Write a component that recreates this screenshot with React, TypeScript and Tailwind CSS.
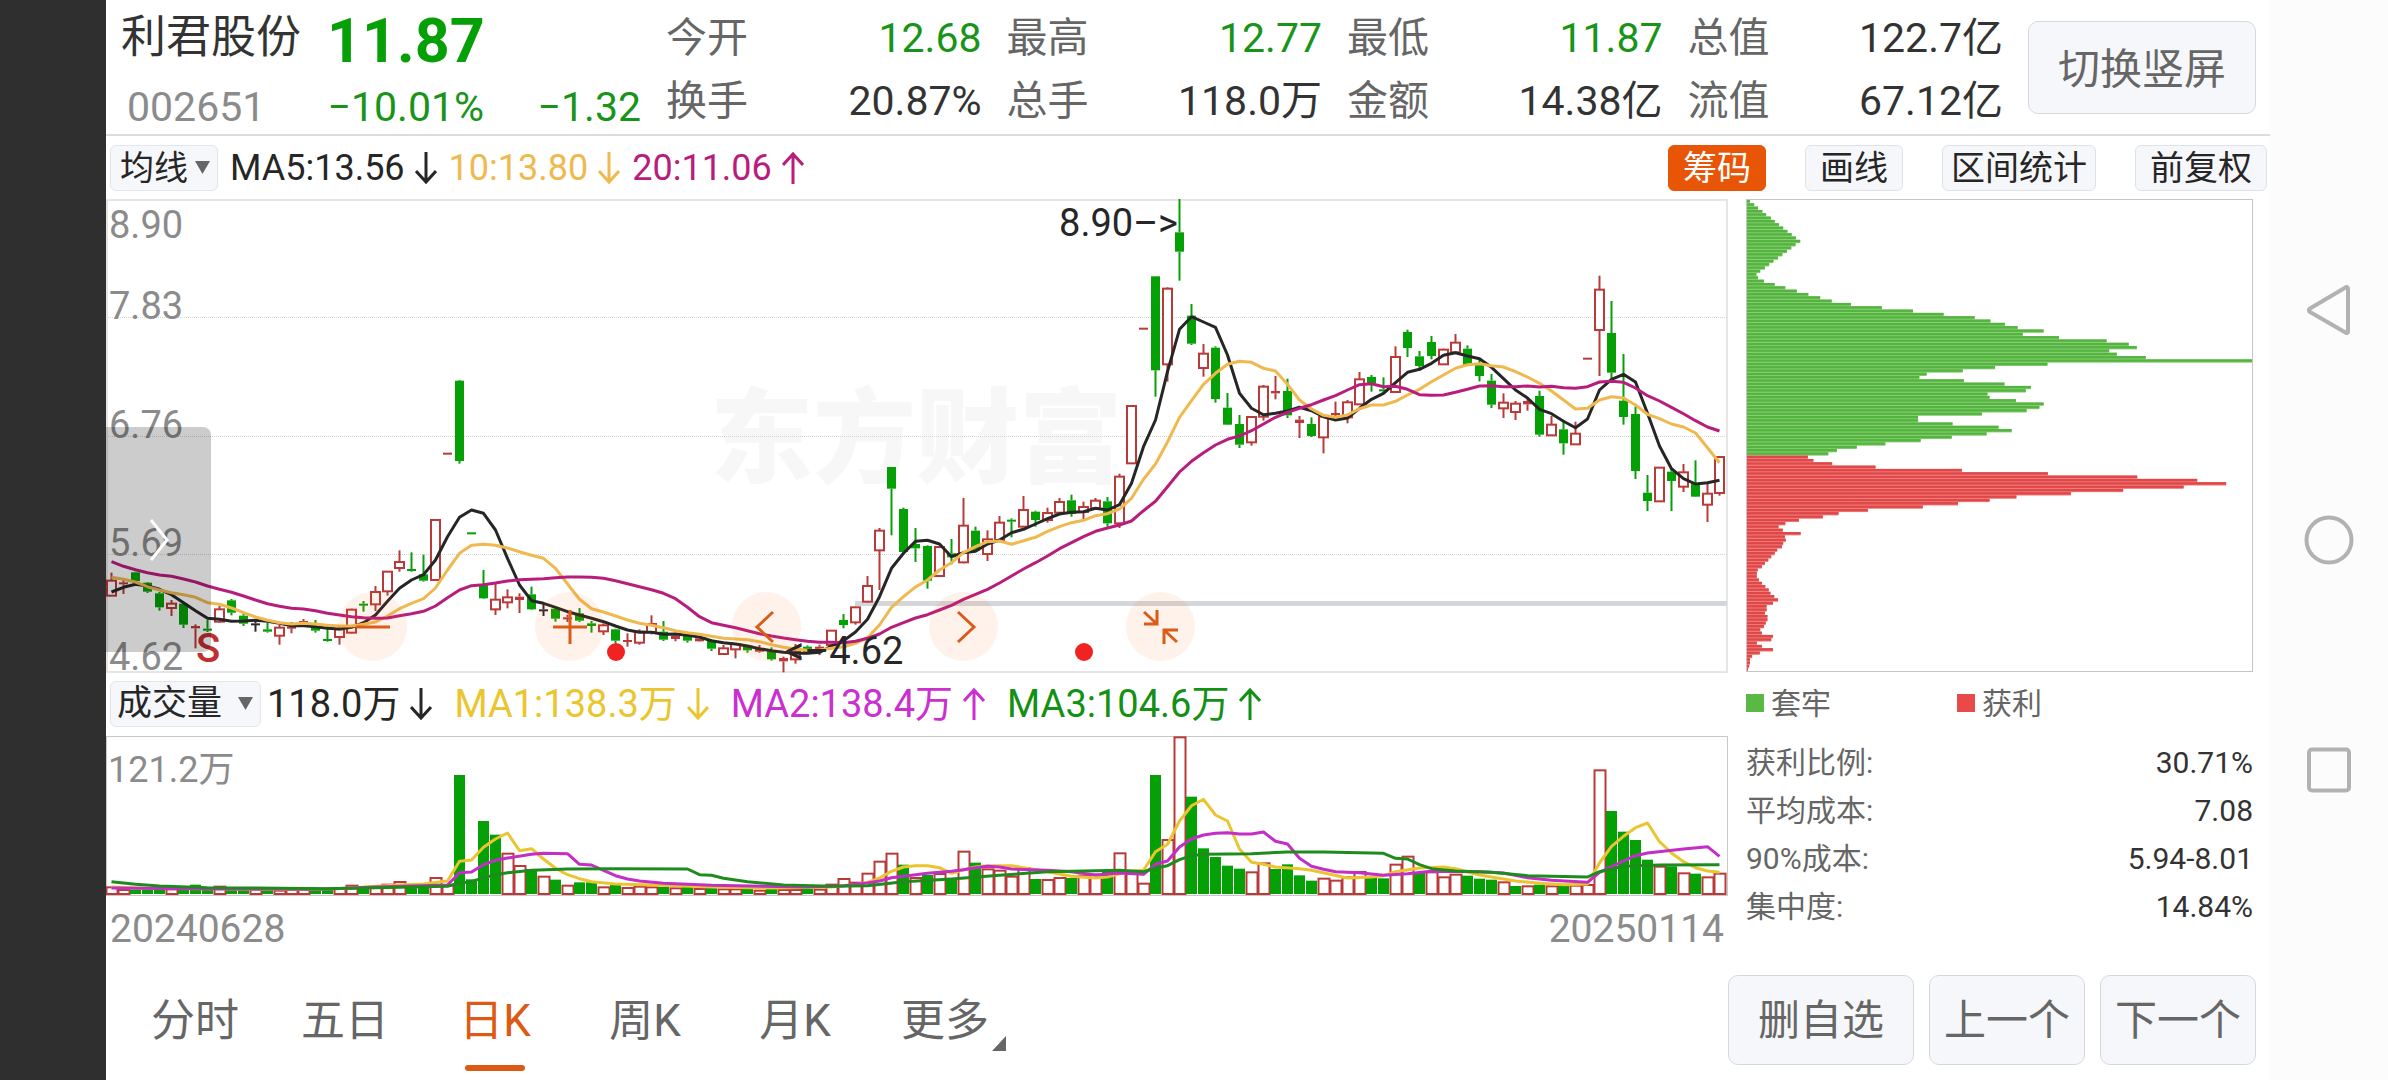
import { Fragment } from "react";
import type { ReactNode } from "react";

type Kind = "r" | "g" | "k";
type Candle = [Kind, number, number, number, number];

// [colour, high, body top, body bottom, low], levels in thirds of a pixel
const candles: Candle[] = [
  ["r", 1148, 1172, 1217, 1217], ["r", 1170, 1177, 1183, 1212], ["g", 1145, 1147, 1173, 1175],
  ["g", 1176, 1178, 1205, 1209], ["g", 1206, 1210, 1252, 1262], ["r", 1230, 1241, 1254, 1278],
  ["g", 1240, 1241, 1304, 1314], ["r", 1303, 1308, 1315, 1375], ["g", 1290, 1316, 1322, 1326],
  ["r", 1248, 1258, 1295, 1298], ["g", 1227, 1231, 1268, 1276], ["g", 1268, 1277, 1301, 1308],
  ["k", 1288, 1300, 1304, 1325], ["g", 1299, 1318, 1325, 1328], ["r", 1305, 1313, 1337, 1364],
  ["r", 1296, 1310, 1315, 1330], ["r", 1287, 1293, 1298, 1307], ["g", 1290, 1309, 1322, 1328],
  ["g", 1305, 1347, 1352, 1355], ["r", 1310, 1318, 1341, 1364], ["r", 1256, 1259, 1328, 1330],
  ["g", 1233, 1241, 1246, 1265], ["r", 1188, 1206, 1243, 1263], ["r", 1143, 1145, 1204, 1217],
  ["r", 1081, 1116, 1134, 1145], ["g", 1087, 1137, 1143, 1145], ["g", 1094, 1153, 1172, 1175],
  ["r", 988, 990, 1170, 1172], ["r", 788, 788, 794, 794], ["g", 570, 572, 813, 821],
  ["g", 1027, 1027, 1032, 1032], ["g", 1140, 1186, 1225, 1227], ["r", 1180, 1229, 1258, 1275],
  ["r", 1198, 1222, 1237, 1255], ["r", 1210, 1220, 1230, 1269], ["g", 1190, 1213, 1258, 1260],
  ["k", 1240, 1258, 1262, 1278], ["g", 1254, 1256, 1286, 1295], ["r", 1274, 1282, 1287, 1296],
  ["g", 1254, 1270, 1292, 1296], ["g", 1293, 1300, 1308, 1328], ["r", 1300, 1306, 1324, 1335],
  ["g", 1316, 1318, 1352, 1360], ["r", 1330, 1350, 1355, 1370], ["r", 1318, 1325, 1358, 1364],
  ["r", 1276, 1302, 1326, 1333], ["g", 1293, 1325, 1349, 1353], ["r", 1328, 1337, 1347, 1354],
  ["g", 1336, 1338, 1352, 1358], ["r", 1342, 1345, 1354, 1355], ["g", 1348, 1350, 1376, 1383],
  ["r", 1365, 1375, 1392, 1395], ["r", 1360, 1362, 1378, 1405], ["g", 1365, 1367, 1381, 1388],
  ["r", 1365, 1377, 1385, 1388], ["g", 1372, 1384, 1408, 1412], ["r", 1400, 1404, 1414, 1447],
  ["r", 1362, 1385, 1408, 1421], ["g", 1366, 1370, 1390, 1392], ["r", 1364, 1370, 1380, 1395],
  ["r", 1320, 1322, 1365, 1368], ["g", 1272, 1290, 1305, 1315], ["r", 1250, 1252, 1297, 1304],
  ["r", 1158, 1188, 1235, 1237], ["r", 1014, 1022, 1081, 1200], ["g", 831, 831, 896, 1036],
  ["g", 953, 957, 1086, 1088], ["g", 1014, 1062, 1075, 1116], ["g", 1066, 1068, 1172, 1196],
  ["r", 1070, 1071, 1158, 1160], ["g", 1047, 1090, 1102, 1123], ["r", 924, 1007, 1117, 1120],
  ["g", 1010, 1022, 1081, 1085], ["r", 1021, 1048, 1092, 1113], ["r", 978, 998, 1050, 1052],
  ["g", 985, 989, 995, 1042], ["r", 918, 960, 1010, 1012], ["g", 962, 965, 990, 1010],
  ["r", 953, 969, 990, 998], ["r", 924, 936, 968, 970], ["g", 914, 931, 972, 980],
  ["r", 935, 951, 966, 987], ["r", 924, 932, 955, 958], ["g", 921, 934, 1000, 1010],
  ["r", 851, 860, 1000, 1014], ["r", 646, 648, 820, 821], ["r", 413, 413, 418, 418],
  ["g", 258, 259, 541, 620], ["r", 292, 296, 523, 575], ["g", 27, 127, 185, 272],
  ["g", 342, 377, 461, 465], ["r", 462, 491, 534, 560], ["g", 469, 473, 627, 638],
  ["g", 609, 653, 704, 705], ["g", 675, 702, 764, 774], ["r", 679, 681, 757, 767],
  ["r", 585, 590, 680, 692], ["r", 558, 603, 610, 628], ["g", 566, 603, 676, 684],
  ["r", 678, 689, 699, 744], ["g", 682, 702, 738, 741], ["r", 678, 680, 742, 790],
  ["r", 635, 669, 675, 685], ["r", 630, 637, 682, 700], ["r", 546, 568, 643, 645],
  ["g", 555, 561, 580, 605], ["g", 562, 598, 604, 612], ["r", 469, 501, 606, 608],
  ["g", 419, 426, 474, 501], ["g", 483, 499, 528, 543], ["g", 438, 456, 498, 508],
  ["r", 476, 479, 523, 525], ["r", 432, 458, 487, 489], ["g", 466, 476, 526, 528],
  ["g", 505, 520, 558, 574], ["g", 552, 572, 644, 654], ["r", 610, 638, 655, 684],
  ["r", 633, 641, 666, 690], ["r", 625, 633, 643, 662], ["g", 602, 618, 734, 740],
  ["r", 678, 704, 736, 738], ["g", 695, 718, 760, 794], ["r", 695, 731, 763, 765],
  ["r", 503, 503, 508, 508], ["r", 257, 299, 420, 558], ["g", 333, 429, 548, 568],
  ["g", 492, 632, 681, 704], ["g", 650, 672, 843, 867], ["g", 855, 908, 933, 963],
  ["r", 831, 833, 934, 936], ["g", 835, 845, 873, 963], ["r", 822, 847, 890, 906],
  ["g", 811, 880, 920, 921], ["r", 880, 911, 944, 996], ["r", 799, 801, 909, 917],
];

const ma5 = [
  1206, 1192, 1183, 1188, 1198, 1214, 1238, 1262, 1285, 1288, 1294, 1293, 1291, 1294, 1300,
  1307, 1307, 1310, 1315, 1317, 1312, 1298, 1275, 1234, 1195, 1170, 1154, 1110, 1040, 982,
  960, 970, 1020, 1105, 1185, 1232, 1240, 1252, 1265, 1275, 1285, 1295, 1308, 1320, 1327,
  1327, 1333, 1332, 1336, 1341, 1352, 1358, 1362, 1368, 1376, 1382, 1387, 1390, 1390, 1387,
  1368, 1352, 1326, 1288, 1220, 1135, 1090, 1054, 1051, 1062, 1100, 1088, 1084, 1062, 1050,
  1028, 1018, 1002, 986, 972, 967, 965, 955, 960, 944, 880, 770, 690, 545, 418,
  380, 396, 412, 495, 610, 655, 674, 670, 663, 652, 662, 680, 690, 684, 655,
  628, 610, 578, 547, 538, 520, 496, 488, 498, 506, 532, 566, 600, 624, 658,
  671, 694, 713, 687, 600, 568, 553, 576, 670, 768, 836, 866, 882, 878, 871,
];

const ma10 = [
  1162, 1168, 1176, 1190, 1200, 1208, 1214, 1222, 1238, 1243, 1254, 1268, 1281, 1291, 1298,
  1302, 1300, 1302, 1306, 1308, 1308, 1303, 1296, 1278, 1256, 1240, 1226, 1194, 1140, 1090,
  1066, 1063, 1066, 1074, 1085, 1096, 1105, 1135, 1182, 1228, 1256, 1266, 1278, 1290, 1300,
  1306, 1313, 1322, 1328, 1333, 1339, 1345, 1347, 1349, 1355, 1364, 1372, 1377, 1381, 1380,
  1375, 1370, 1360, 1343, 1305, 1252, 1220, 1191, 1170, 1140, 1118, 1088, 1070, 1055, 1053,
  1063, 1052, 1042, 1024, 1010, 998, 991, 977, 971, 957, 925, 868, 822, 756, 682,
  632, 583, 550, 523, 514, 517, 535, 543, 583, 630, 657, 676, 682, 675, 656,
  645, 645, 634, 615, 598, 575, 555, 535, 524, 521, 527, 531, 545, 561, 580,
  603, 630, 657, 655, 630, 620, 624, 645, 673, 686, 702, 711, 729, 773, 818,
];

const ma20 = [
  1115, 1129, 1139, 1148, 1155, 1159, 1167, 1176, 1188, 1198, 1207, 1218, 1230, 1241, 1249,
  1255, 1257, 1262, 1270, 1275, 1280, 1283, 1285, 1284, 1277, 1271, 1264, 1248, 1223, 1200,
  1187, 1184, 1179, 1173, 1169, 1168, 1166, 1163, 1161, 1161, 1162, 1165, 1172, 1181, 1190,
  1199, 1210, 1226, 1252, 1280, 1298, 1306, 1313, 1322, 1331, 1338, 1344, 1349, 1354, 1357,
  1357, 1358, 1354, 1345, 1332, 1312, 1298, 1284, 1274, 1260, 1246, 1228, 1213, 1198, 1179,
  1158, 1137, 1118, 1098, 1076, 1058, 1040, 1024, 1014, 1005, 993, 962, 934, 890, 846,
  814, 788, 765, 748, 738, 722, 702, 682, 667, 655, 644, 630, 617, 600, 584,
  581, 590, 589, 598, 614, 616, 615, 607, 598, 588, 587, 590, 590, 588, 591,
  589, 593, 595, 590, 576, 574, 577, 594, 617, 633, 652, 671, 692, 711, 723,
];

const volumeKinds =
  "rrgggrgggrggrgrrrggrrgrrrggrrggggrrgrgrggrgrrrgrgrgrrgrgrrgrrrrrrrgrgrgrgrrrrgrrgrrgrrrgrrggggg" +
  "rrggggrrrrggrrgrrrgggrgrgrgrrrggggrgrgrr";

const volumes = [
  650, 658, 660, 660, 660, 656, 656, 645, 654, 648, 654, 656, 658, 660, 660,
  658, 658, 660, 658, 652, 645, 655, 648, 642, 634, 650, 652, 622, 644, 316,
  629, 454, 495, 549, 586, 598, 618, 630, 645, 638, 638, 650, 645, 652, 648,
  650, 652, 653, 650, 655, 655, 656, 656, 654, 660, 658, 658, 658, 658, 657,
  642, 625, 636, 609, 573, 549, 585, 622, 616, 610, 625, 543, 579, 596, 600,
  618, 592, 628, 628, 622, 625, 615, 612, 605, 548, 608, 639, 316, 508, 200,
  381, 536, 562, 588, 597, 605, 578, 598, 584, 617, 633, 624, 630, 620, 604,
  624, 626, 582, 558, 610, 605, 620, 612, 618, 627, 630, 635, 649, 647, 645,
  647, 648, 645, 643, 299, 424, 486, 511, 570, 588, 590, 608, 612, 620, 609,
];

// [day index, level]
const volMa1 = [
  [0, 652], [3, 656], [8, 657], [12, 659], [18, 658], [20, 655], [22, 650], [24, 646], [26, 643],
  [28, 634], [29, 575], [30, 571], [31, 533], [32, 508], [33, 490], [34, 543], [35, 537], [36, 568],
  [37, 596], [38, 615], [39, 627], [40, 636], [42, 643], [45, 646], [50, 652], [55, 655], [60, 652],
  [62, 645], [63, 638], [64, 625], [65, 605], [66, 592], [67, 588], [68, 588], [69, 594], [70, 611],
  [71, 600], [72, 592], [73, 588], [75, 588], [76, 594], [78, 606], [80, 620], [82, 625], [83, 622],
  [84, 612], [85, 604], [86, 602], [87, 546], [88, 524], [89, 454], [90, 408], [91, 389], [92, 436],
  [93, 454], [94, 538], [95, 578], [96, 584], [97, 592], [99, 597], [100, 602], [103, 625],
  [105, 622], [106, 618], [107, 606], [109, 595], [111, 592], [112, 597], [114, 616], [117, 634],
  [119, 641], [121, 645], [123, 643], [124, 580], [125, 530], [126, 500], [127, 474], [128, 460],
  [129, 516], [130, 550], [131, 576], [132, 594], [133, 604], [134, 608],
];
const volMa2 = [
  [0, 655], [8, 658], [18, 658], [22, 652], [28, 646], [29, 609], [30, 607], [31, 585], [32, 572],
  [33, 565], [35, 554], [36, 551], [38, 552], [39, 584], [40, 586], [41, 602], [42, 618], [43, 628],
  [44, 634], [46, 641], [50, 647], [58, 652], [61, 648], [63, 640], [64, 634], [65, 624], [66, 620],
  [68, 611], [70, 605], [71, 600], [72, 594], [73, 590], [74, 592], [75, 598], [78, 602], [80, 606],
  [82, 616], [84, 610], [86, 614], [87, 584], [88, 574], [89, 532], [90, 508], [91, 496], [92, 491],
  [93, 489], [94, 493], [95, 493], [96, 487], [97, 515], [98, 523], [99, 566], [100, 590],
  [101, 599], [102, 606], [104, 609], [106, 617], [108, 612], [110, 605], [114, 606], [116, 610],
  [118, 624], [120, 632], [123, 638], [124, 608], [126, 574], [127, 558], [128, 550], [131, 538],
  [133, 531], [134, 560],
];
const volMa3 = [
  [0, 636], [2, 644], [4, 649], [8, 654], [14, 656], [18, 657], [22, 654], [28, 650], [29, 640],
  [30, 636], [31, 624], [32, 615], [33, 609], [35, 602], [38, 598], [42, 597], [48, 598], [49, 615],
  [50, 617], [51, 626], [53, 636], [56, 646], [60, 650], [63, 648], [66, 636], [70, 628], [74, 617],
  [78, 606], [84, 602], [86, 606], [87, 595], [88, 588], [89, 570], [90, 558], [91, 554], [95, 552],
  [98, 547], [101, 547], [106, 551], [107, 566], [108, 568], [109, 585], [110, 597], [112, 604],
  [115, 608], [118, 618], [123, 622], [124, 606], [126, 590], [129, 586], [134, 585],
];

// chip counts per price level, the first 77 levels lie above the last price
const chips = [
  7, 17, 26, 36, 45, 56, 65, 75, 85, 95, 105, 115, 125, 114, 104, 94, 83, 73, 62, 52, 42, 31, 22,
  26, 40, 65, 90, 117, 144, 172, 199, 244, 317, 390, 462, 535, 572, 606, 636, 697, 648, 733, 845,
  897, 916, 851, 869, 937, 1188, 706, 583, 507, 422, 405, 510, 605, 667, 655, 565, 570, 632, 697,
  687, 657, 552, 402, 402, 483, 591, 622, 563, 481, 408, 325, 258, 211, 191,
  143, 156, 200, 302, 505, 707, 917, 1058, 1126, 1026, 884, 761, 633, 570, 496, 413, 284, 215,
  178, 122, 90, 74, 84, 126, 89, 91, 85, 82, 71, 65, 57, 50, 42, 35, 25, 23, 23, 28, 35, 43, 51,
  55, 64, 73, 61, 46, 46, 42, 48, 48, 44, 40, 31, 35, 61, 57, 23, 35, 61, 30, 12, 7, 7, 5, 2,
];
const TRAPPED_LEVELS = 77;

const GREEN = "#05a005";
const RED = "#b93a38";

const dayX = (i: number) => 5.5 + i * 12;
const priceY = (v: number) => v / 3 - 9;
const volumeY = (v: number) => (v - 199) / 3;

const pricePath = (values: number[]) =>
  values.map((v, i) => `${dayX(i)},${priceY(v).toFixed(1)}`).join(" ");
const volumePath = (points: number[][]) =>
  points.map(([i, v]) => `${dayX(i)},${volumeY(v).toFixed(1)}`).join(" ");

function CandleMark({ candle, x }: { candle: Candle; x: number }) {
  const [kind, high, top, bottom, low] = candle;
  const yTop = priceY(top);
  const height = priceY(bottom) - yTop;
  const hollow = kind === "r" && height > 3.8;
  const color = kind === "g" ? GREEN : kind === "k" ? "#2a2a2a" : RED;

  return (
    <g stroke={color} strokeWidth={2}>
      {high < top && <line x1={x} x2={x} y1={priceY(high)} y2={yTop} />}
      {low > bottom && <line x1={x} x2={x} y1={yTop + height} y2={priceY(low)} />}
      {hollow ? (
        <rect x={x - 4.5} y={yTop} width={9} height={height} fill="#fff" />
      ) : (
        <rect x={x - 4.5} y={yTop} width={9} height={Math.max(height, 2)} fill={color} stroke="none" />
      )}
    </g>
  );
}

function PriceChart() {
  const axis: [string, number][] = [
    ["8.90", 39],
    ["7.83", 120],
    ["6.76", 239],
    ["5.69", 357],
    ["4.62", 471],
  ];

  return (
    <svg viewBox="0 0 1622 473" className="block w-full overflow-visible" role="img" aria-label="日K">
      <text x={604} y={276} fontSize={103} fontWeight={900} fill="#f7f7f7">
        东方财富
      </text>
      {[118, 237, 355].map((y) => (
        <line key={y} x1={0} x2={1622} y1={y + 0.5} y2={y + 0.5} stroke="#d4d4d4" strokeDasharray="1 1" />
      ))}
      <rect x={1} y={1} width={1620} height={472} fill="none" stroke="#e5e5e5" strokeWidth={2} />
      <rect x={749} y={402} width={872} height={5} fill="#d3d7dc" />
      <g fontSize={38} fill="#8b8b8b">
        {axis.map(([label, y]) => (
          <text key={label} x={3} y={y}>
            {label}
          </text>
        ))}
      </g>
      {candles.map((candle, i) => (
        <CandleMark key={i} candle={candle} x={dayX(i)} />
      ))}
      <g fill="none" strokeWidth={3} strokeLinejoin="round">
        <polyline points={pricePath(ma5)} stroke="#262626" />
        <polyline points={pricePath(ma10)} stroke="#efb950" />
        <polyline points={pricePath(ma20)} stroke="#b91d7c" />
      </g>
      <g fontSize={38} fill="#262626">
        <text x={1072} y={37} textAnchor="end">
          8.90–&gt;
        </text>
        <text x={679} y={465}>
          &lt;–4.62
        </text>
      </g>
      <text x={90} y={463} fontSize={40} fontWeight={500} fill="#c0302e">
        S
      </text>
      <circle cx={510} cy={453} r={9} fill="#f02222" />
      <circle cx={978} cy={453} r={9} fill="#f02222" />
    </svg>
  );
}

function VolumeChart() {
  return (
    <svg viewBox="0 0 1622 160" className="block w-full" role="img" aria-label="成交量">
      <rect x={0.5} y={0.5} width={1621} height={159} fill="none" stroke="#c8c8c8" />
      <text x={2} y={46} fontSize={36} fill="#8b8b8b">
        121.2万
      </text>
      {volumes.map((v, i) => {
        const y = volumeY(v);
        return volumeKinds[i] === "g" ? (
          <rect key={i} x={dayX(i) - 5.5} y={y} width={11} height={158 - y} fill={GREEN} />
        ) : (
          <rect
            key={i}
            x={dayX(i) - 5}
            y={y + 1}
            width={11}
            height={157 - y}
            fill="#fff"
            stroke={RED}
            strokeWidth={2}
          />
        );
      })}
      <g fill="none" strokeWidth={3} strokeLinejoin="round">
        <polyline points={volumePath(volMa1)} stroke="#eac52f" />
        <polyline points={volumePath(volMa2)} stroke="#c32fc6" />
        <polyline points={volumePath(volMa3)} stroke="#1d8c1d" />
      </g>
    </svg>
  );
}

function ChipChart() {
  const step = 3.32;
  return (
    <svg viewBox="0 0 507 473" className="block w-full" role="img" aria-label="筹码">
      {chips.map((count, i) => {
        const trapped = i < TRAPPED_LEVELS;
        const y = 1 + i * step;
        return (
          <Fragment key={i}>
            <rect x={1} y={y} width={count / 2.35} height={step} fill={trapped ? "#7fce6c" : "#f57676"} />
            <rect x={1} y={y} width={count / 2.35} height={2.4} fill={trapped ? "#55b440" : "#de4848"} />
          </Fragment>
        );
      })}
      <rect x={0.5} y={0.5} width={506} height={472} fill="none" stroke="#c4c4c4" />
    </svg>
  );
}

function Arrow({ up = false }: { up?: boolean }) {
  return (
    <svg width="22" height="34" viewBox="0 0 22 34" fill="none" stroke="currentColor" strokeWidth="3">
      <path d={up ? "M11 33V3M1 14L11 3L21 14" : "M11 1V31M1 20L11 31L21 20"} />
    </svg>
  );
}

function Indicator({ text, className, up }: { text: string; className: string; up?: boolean }) {
  return (
    <span className={`flex items-center gap-[10px] whitespace-nowrap ${className}`}>
      {text}
      <Arrow up={up} />
    </span>
  );
}

function Picker({ label, options, className }: { label: string; options: string[]; className: string }) {
  return (
    <div className="relative">
      <select
        aria-label={label}
        className={`block h-[46px] appearance-none rounded-md border border-[#e2e5e9] bg-[#f6f7fa] leading-[44px] text-[#262626] ${className}`}
      >
        {options.map((option) => (
          <option key={option}>{option}</option>
        ))}
      </select>
      <svg
        className="pointer-events-none absolute top-4 right-2"
        width="15"
        height="13"
        viewBox="0 0 15 13"
        fill="#666"
      >
        <path d="M0 0H15L7.5 13Z" />
      </svg>
    </div>
  );
}

function ToolButton({ children, className }: { children: ReactNode; className: string }) {
  return (
    <button
      type="button"
      className={`h-[46px] rounded-md border text-[34px] leading-[44px] whitespace-nowrap ${className}`}
    >
      {children}
    </button>
  );
}

const chartActions = [
  { label: "缩小", path: "M-17 0H17" },
  { label: "放大", path: "M-17 0H17M0 -17V17" },
  { label: "左移", path: "M6 -15L-10 0L6 15" },
  { label: "右移", path: "M-6 -15L10 0L-6 15" },
  { label: "收起", path: "M-17 -15L-4 -3M-4 -17V-3H-17M16 15L4 4M17 3H3V17" },
];

const quotes = [
  [["今开", "12.68", true], ["换手", "20.87%", false]],
  [["最高", "12.77", true], ["总手", "118.0万", false]],
  [["最低", "11.87", true], ["金额", "14.38亿", false]],
  [["总值", "122.7亿", false], ["流值", "67.12亿", false]],
] as [string, string, boolean][][];

const chipStats = [
  ["获利比例:", "30.71%"],
  ["平均成本:", "7.08"],
  ["90%成本:", "5.94-8.01"],
  ["集中度:", "14.84%"],
];

const periods = ["分时", "五日", "日K", "周K", "月K", "更多"];

function Header() {
  return (
    <header className="flex h-[136px] border-b-2 border-[#dcdcdc] pr-[14px]">
      <div className="w-[560px] pl-[15px]">
        <div className="flex h-[76px] items-center gap-[26px] whitespace-nowrap">
          <h1 className="text-[45px] text-[#333]">利君股份</h1>
          <span className="pt-[6px] text-[61px] leading-[76px] font-bold text-[#05a005]">11.87</span>
        </div>
        <div className="flex h-[62px] items-center pl-[6px] text-[41px] leading-[62px] whitespace-nowrap text-[#189418]">
          <span className="text-[#8b8b8b]">002651</span>
          <span className="flex-1 text-right">−10.01%</span>
          <span className="w-[157px] text-right">−1.32</span>
          <span className="w-[25px]" />
        </div>
      </div>
      <dl className="grid flex-1 grid-cols-4 pt-[7px] text-[41px]">
        {quotes.map((column) => (
          <div key={column[0][0]} className="pr-[25px]">
            {column.map(([label, value, down]) => (
              <div key={label} className="flex h-[63px] items-center justify-between whitespace-nowrap">
                <dt className="text-[#666]">{label}</dt>
                <dd className={down ? "text-[#189418]" : "text-[#333]"}>{value}</dd>
              </div>
            ))}
          </div>
        ))}
      </dl>
      <button
        type="button"
        className="mt-[21px] h-[93px] w-[228px] rounded-[10px] border border-[#d5d9de] bg-[#f6f7fa] pt-[3px] text-[42px] text-[#666]"
      >
        切换竖屏
      </button>
    </header>
  );
}

function Toolbar() {
  return (
    <div className="flex h-[63px] items-center justify-between pr-[3px] pl-1">
      <div className="flex items-center gap-3 text-[36px]">
        <Picker label="主图指标" options={["均线"]} className="w-[108px] pl-[9px] text-[34px]" />
        <Indicator text="MA5:13.56" className="text-[#262626]" />
        <Indicator text="10:13.80" className="text-[#efb950]" />
        <Indicator text="20:11.06" className="text-[#b91d7c]" up />
      </div>
      <div className="flex items-center gap-[39px]">
        <ToolButton className="border-[#e95506] bg-[#e95506] px-[14px] text-white">筹码</ToolButton>
        <ToolButton className="border-[#dfe2e7] bg-[#f6f7fa] px-[14px] text-[#262626]">画线</ToolButton>
        <ToolButton className="border-[#dfe2e7] bg-[#f6f7fa] px-2 text-[#262626]">区间统计</ToolButton>
        <ToolButton className="border-[#dfe2e7] bg-[#f6f7fa] px-[14px] text-[#262626]">前复权</ToolButton>
      </div>
    </div>
  );
}

export default function App() {
  return (
    <div className="flex min-h-screen bg-white font-[Roboto,'Noto_Sans_CJK_SC',sans-serif]">
      <div className="w-[106px] shrink-0 bg-[#2f2f2f]" />

      <main className="flex min-w-0 flex-1 flex-col">
        <Header />
        <Toolbar />

        <div className="grid grid-cols-[minmax(0,1fr)_507px] gap-x-[18px] pr-[17px]">
          <section>
            <div className="relative">
              <PriceChart />
              {/* 图表操作 */}
              <div className="absolute bottom-[11px] left-[232px] flex gap-32">
                {chartActions.map(({ label, path }) => (
                  <button
                    key={label}
                    type="button"
                    aria-label={label}
                    className="flex size-[69px] items-center justify-center rounded-full bg-[#ff5a06]/8"
                  >
                    <svg width="40" height="40" viewBox="-20 -20 40 40" fill="none" stroke="#d95c18" strokeWidth="3">
                      <path d={path} />
                    </svg>
                  </button>
                ))}
              </div>
              <button
                type="button"
                aria-label="展开"
                className="absolute top-[228px] left-0 flex h-[225px] w-[105px] items-center justify-center rounded-r-lg bg-black/20"
              >
                <svg width="20" height="44" viewBox="0 0 20 44" fill="none" stroke="#fff" strokeWidth="3">
                  <path d="M2 2L18 22L2 42" />
                </svg>
              </button>
            </div>

            <div className="flex h-16 items-center gap-[22px] pl-1 text-[38px]">
              <div className="-mr-4">
                <Picker label="副图指标" options={["成交量"]} className="w-[151px] pl-[6px] text-[35px]" />
              </div>
              <Indicator text="118.0万" className="text-[#262626]" />
              <Indicator text="MA1:138.3万" className="text-[#eac52f]" />
              <Indicator text="MA2:138.4万" className="text-[#cb2fd0]" up />
              <Indicator text="MA3:104.6万" className="text-[#149014]" up />
            </div>

            <VolumeChart />
            <div className="flex h-[66px] items-center justify-between px-1 text-[39px] text-[#8b8b8b]">
              <span>20240628</span>
              <span>20250114</span>
            </div>
          </section>

          <aside>
            <ChipChart />
            <div className="flex h-[62px] items-center text-[30px] text-[#666]">
              <span className="flex w-[211px] items-center gap-[7px]">
                <i className="size-[18px] bg-[#5ab945]" />
                套牢
              </span>
              <span className="flex items-center gap-[7px]">
                <i className="size-[18px] bg-[#e84a4a]" />
                获利
              </span>
            </div>
            <dl className="pt-1 text-[30px]">
              {chipStats.map(([label, value]) => (
                <div key={label} className="flex h-12 items-center justify-between">
                  <dt className="text-[#666]">{label}</dt>
                  <dd className="text-[#333]">{value}</dd>
                </div>
              ))}
            </dl>
          </aside>
        </div>

        <footer className="mt-auto flex h-[105px] items-start justify-between pr-[14px] pl-[14px]">
          <nav className="flex">
            {periods.map((period) => (
              <button
                key={period}
                type="button"
                className={`relative flex h-24 w-[150px] items-center justify-center pb-1 text-[44px] ${
                  period === "日K" ? "text-[#dd5a14]" : "text-[#666]"
                }`}
              >
                {period}
                {period === "日K" && (
                  <span className="absolute bottom-0 h-[6px] w-[60px] rounded-full bg-[#dd5a14]" />
                )}
                {period === "更多" && (
                  <svg className="absolute right-[14px] bottom-5" width="14" height="15" viewBox="0 0 14 15" fill="#666">
                    <path d="M14 0V15H0Z" />
                  </svg>
                )}
              </button>
            ))}
          </nav>
          <div className="flex gap-[15px] text-[42px] text-[#666]">
            <button type="button" className="h-[90px] w-[186px] rounded-[10px] border border-[#d5d9de] bg-[#f6f7fa]">
              删自选
            </button>
            <button type="button" className="h-[90px] w-[156px] rounded-[10px] border border-[#d5d9de] bg-[#f6f7fa]">
              上一个
            </button>
            <button type="button" className="h-[90px] w-[156px] rounded-[10px] border border-[#d5d9de] bg-[#f6f7fa]">
              下一个
            </button>
          </div>
        </footer>
      </main>

      {/* 系统导航键 */}
      <nav className="flex w-[118px] shrink-0 flex-col items-center justify-center gap-[180px] bg-[#fcfcfc]">
        <button type="button" aria-label="返回">
          <svg className="block" width="50" height="50" viewBox="0 0 50 50" fill="none" stroke="#b2b2b2" strokeWidth="4" strokeLinejoin="round">
            <path d="M44 3.5C44 2 42.5 1.5 41.5 2.5L6 23.5C4.5 24.5 4.5 26 6 27L41.5 47.5C42.5 48.5 44 48 44 46.5Z" />
          </svg>
        </button>
        <button type="button" aria-label="主页">
          <svg className="block" width="50" height="50" viewBox="0 0 50 50" fill="none" stroke="#b2b2b2" strokeWidth="4">
            <circle cx="25" cy="25" r="22.5" />
          </svg>
        </button>
        <button type="button" aria-label="最近任务">
          <svg className="block" width="50" height="50" viewBox="0 0 50 50" fill="none" stroke="#b2b2b2" strokeWidth="4">
            <rect x="5" y="4.5" width="40" height="41" rx="3" />
          </svg>
        </button>
      </nav>
    </div>
  );
}
